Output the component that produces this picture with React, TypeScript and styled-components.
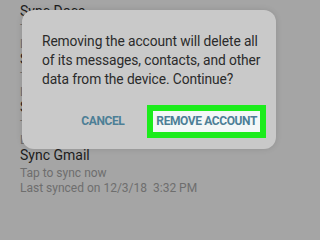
import React from "react";
import styled, { createGlobalStyle } from "styled-components";

const GlobalStyle = createGlobalStyle`
  html, body {
    margin: 0;
    padding: 0;
    background: #a5a5a5;
  }
  body {
    font-family: Roboto, "Noto Sans", sans-serif;
  }
`;

interface SyncItem {
  title: string;
  status: string;
  synced: string;
}

const syncItems: SyncItem[] = [
  { title: "Sync Docs", status: "Tap to sync now", synced: "Last synced on 12/3/18  3:32 PM" },
  { title: "Sync Drive", status: "Tap to sync now", synced: "Last synced on 12/3/18  3:32 PM" },
  { title: "Sync Fit data", status: "Tap to sync now", synced: "Last synced on 12/3/18  3:32 PM" },
  { title: "Sync Gmail", status: "Tap to sync now", synced: "Last synced on 12/3/18  3:32 PM" },
];

const App: React.FC = () => {
  return (
    <>
      <GlobalStyle />
      <Screen>
        <SettingsList>
          {syncItems.map((item) => (
            <SettingsItem key={item.title}>
              <ItemTitle>{item.title}</ItemTitle>
              <ItemSub>{item.status}</ItemSub>
              <ItemSub>{item.synced}</ItemSub>
            </SettingsItem>
          ))}
        </SettingsList>

        <Dialog>
          <DialogMessage>
            Removing the account will delete all of its messages, contacts, and
            other data from the device. Continue?
          </DialogMessage>
          <DialogActions>
            <ActionButton>CANCEL</ActionButton>
            <Highlight>
              <ActionButton>REMOVE ACCOUNT</ActionButton>
            </Highlight>
          </DialogActions>
        </Dialog>
      </Screen>
    </>
  );
};

const Screen = styled.div`
  position: relative;
  width: 300px;
  height: 200px;
  overflow: hidden;
  background: #a5a5a5;
`;

const SettingsList = styled.div`
  display: flex;
  flex-direction: column;
  padding: 2px 0 0 20px;
`;

const SettingsItem = styled.div`
  height: 48px;
  display: flex;
  flex-direction: column;
`;

const ItemTitle = styled.div`
  font-size: 14px;
  line-height: 18px;
  color: #1c1c1c;
  margin-bottom: 2px;
`;

const ItemSub = styled.div`
  font-size: 12px;
  line-height: 15px;
  color: #6e6e6e;
  white-space: pre;
`;

const Dialog = styled.div`
  position: absolute;
  left: 22px;
  top: 10px;
  width: 254px;
  height: 139px;
  box-sizing: border-box;
  background: #c9c9c9;
  border-radius: 12px;
  box-shadow: 0 0 6px rgba(0, 0, 0, 0.12);
  padding: 22px 10px 0 20px;
  display: flex;
  flex-direction: column;
`;

const DialogMessage = styled.p`
  margin: 0 -4px 0 0;
  font-size: 13.8px;
  line-height: 19px;
  color: #2b2b2b;
  letter-spacing: -0.1px;
`;

const DialogActions = styled.div`
  margin-top: 16px;
  display: flex;
  align-items: center;
  justify-content: flex-end;
  gap: 23px;
`;

const ActionButton = styled.div`
  font-size: 12px;
  line-height: 15px;
  font-weight: 700;
  color: #4d7f96;
  letter-spacing: -0.4px;
`;

const Highlight = styled.div`
  border: 6px solid #1cec1c;
  background: #f3f7f7;
  padding: 3px 3px;
  display: flex;
  align-items: center;
  justify-content: center;
`;

export default App;
